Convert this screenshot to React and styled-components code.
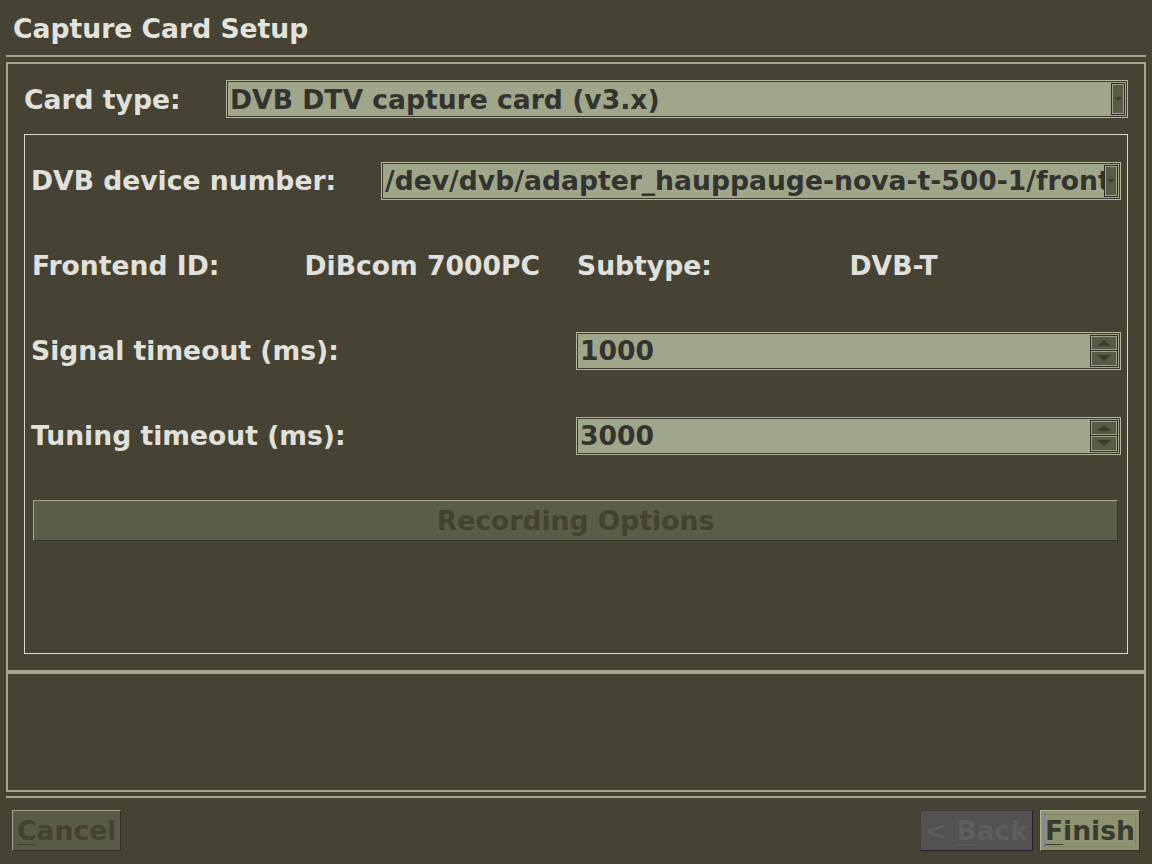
import styled, { createGlobalStyle } from "styled-components";

const GlobalStyle = createGlobalStyle`
    html, body {
        margin: 0;
        padding: 0;
        background: #474334;
    }
    body {
        font-family: "DejaVu Sans", "Liberation Sans", sans-serif;
        font-weight: bold;
        font-size: 26.6px;
    }
`

const Page = styled.div`
    width: 1152px;
    height: 864px;
    box-sizing: border-box;
    padding: 0 6px;
    display: flex;
    flex-direction: column;
    background: #474334;
    color: #e0e0dc;
    overflow: hidden;
`
const Title = styled.div`
    height: 55px;
    box-sizing: border-box;
    padding: 2px 0 0 7px;
    line-height: 53px;
    color: #e2e2de;
`
const Rule = styled.div`
    height: 2px;
    background: #a3a88c;
    margin-top: ${p => p.top || 0}px;
    margin-bottom: ${p => p.bottom || 0}px;
`
const Panel = styled.div`
    height: ${p => p.h}px;
    box-sizing: border-box;
    border: 2px solid #a3a88c;
    padding: ${p => p.pad || 0}px;
    display: flex;
    flex-direction: column;
`
const TopRow = styled.div`
    display: flex;
    align-items: center;
    height: 38px;
`
const Label = styled.div`
    width: ${p => p.w ? p.w + "px" : "auto"};
    flex-shrink: 0;
    white-space: nowrap;
    color: #e0e0dc;
`
const Field = styled.div`
    flex: 1;
    min-width: 0;
    height: 38px;
    box-sizing: border-box;
    border: 1px solid #b3b89c;
    box-shadow: inset 0 0 0 1px #3b3b2f;
    background: #9fa68a;
    display: flex;
    align-items: center;
    padding: 2px 2px 2px 3px;
    color: #333330;
    overflow: hidden;
`
const FieldText = styled.div`
    flex: 1;
    min-width: 0;
    white-space: nowrap;
    overflow: hidden;
`
const DropButton = styled.div`
    width: 14px;
    height: 100%;
    flex-shrink: 0;
    box-sizing: border-box;
    background: #585b46;
    border: 1px solid #2f2f27;
    box-shadow: inset 0 0 0 1px #9ea388;
    display: flex;
    align-items: center;
    justify-content: center;
    &::after {
        content: "";
        border-left: 4px solid transparent;
        border-right: 4px solid transparent;
        border-top: 4px solid #3f3d30;
    }
`
const SpinStack = styled.div`
    width: 28px;
    height: 100%;
    flex-shrink: 0;
    display: flex;
    flex-direction: column;
    gap: 1px;
    background: #2f2f27;
    border: 1px solid #2f2f27;
    box-sizing: border-box;
`
const SpinButton = styled.div`
    flex: 1;
    background: #585b46;
    box-shadow: inset 0 0 0 1px #9ea388;
    display: flex;
    align-items: center;
    justify-content: center;
    &::after {
        content: "";
        border-left: 7px solid transparent;
        border-right: 7px solid transparent;
        ${p => p.up ? "border-bottom: 6px solid #3f3d30;" : "border-top: 6px solid #3f3d30;"}
    }
`
const InnerBox = styled.div`
    flex: 1;
    margin-top: 16px;
    border: 1px solid #dcdcd0;
    padding: 3px 6px 0 6px;
    display: flex;
    flex-direction: column;
`
const Row = styled.div`
    height: 85px;
    display: flex;
    align-items: center;
`
const InfoGrid = styled.div`
    height: 85px;
    display: grid;
    grid-template-columns: repeat(4, 1fr);
    align-items: center;
`
const InfoCell = styled.div`
    padding-left: 1px;
    white-space: nowrap;
    color: #e0e0dc;
`
const Half = styled.div`
    width: 50%;
    display: flex;
    align-items: center;
`
const GroupButton = styled.div`
    width: 100%;
    height: 41px;
    box-sizing: border-box;
    background: #5a5d47;
    border: 1px solid #a3a88c;
    border-right-color: #34342a;
    border-bottom-color: #34342a;
    display: flex;
    align-items: center;
    justify-content: center;
    color: #43432f;
    margin: 0 3px 0 2px;
`
const ButtonBar = styled.div`
    display: flex;
    align-items: center;
    gap: 7px;
    margin-top: 12px;
    padding: 0 6px 0 6px;
`
const Spacer = styled.div`
    flex: 1;
`
const Button = styled.div`
    height: 41px;
    box-sizing: border-box;
    padding: 0 4px;
    display: flex;
    align-items: center;
    white-space: pre;
    background: ${p => p.bg};
    color: ${p => p.fg};
    border: 1px solid ${p => p.light};
    border-right-color: ${p => p.dark};
    border-bottom-color: ${p => p.dark};
    position: relative;
    u {
        text-decoration: underline;
        text-decoration-thickness: 1px;
        text-underline-offset: 4px;
    }
    ${p => p.focus && `
        &::before {
            content: "";
            position: absolute;
            inset: 3px;
            border: 1px dotted #7373a0;
        }
    `}
`

export default function App() {
    return (
        <>
            <GlobalStyle />
            <Page>
                <Title>Capture Card Setup</Title>
                <Rule bottom={5} />
                <Panel h={610} pad={16}>
                    <TopRow>
                        <Label w={202}>Card type:</Label>
                        <Field>
                            <FieldText>DVB DTV capture card (v3.x)</FieldText>
                            <DropButton />
                        </Field>
                    </TopRow>
                    <InnerBox>
                        <Row>
                            <Label w={350}>DVB device number:</Label>
                            <Field>
                                <FieldText>/dev/dvb/adapter_hauppauge-nova-t-500-1/frontend0</FieldText>
                                <DropButton />
                            </Field>
                        </Row>
                        <InfoGrid>
                            <InfoCell>Frontend ID:</InfoCell>
                            <InfoCell>DiBcom 7000PC</InfoCell>
                            <InfoCell>Subtype:</InfoCell>
                            <InfoCell>DVB-T</InfoCell>
                        </InfoGrid>
                        <Row>
                            <Half><Label>Signal timeout (ms):</Label></Half>
                            <Half>
                                <Field>
                                    <FieldText>1000</FieldText>
                                    <SpinStack>
                                        <SpinButton up />
                                        <SpinButton />
                                    </SpinStack>
                                </Field>
                            </Half>
                        </Row>
                        <Row>
                            <Half><Label>Tuning timeout (ms):</Label></Half>
                            <Half>
                                <Field>
                                    <FieldText>3000</FieldText>
                                    <SpinStack>
                                        <SpinButton up />
                                        <SpinButton />
                                    </SpinStack>
                                </Field>
                            </Half>
                        </Row>
                        <Row>
                            <GroupButton>Recording Options</GroupButton>
                        </Row>
                    </InnerBox>
                </Panel>
                <Panel h={120} />
                <Rule top={4} />
                <ButtonBar>
                    <Button bg="#585b46" fg="#45432f" light="#a3a88c" dark="#2f2f27"><span><u>C</u>ancel</span></Button>
                    <Spacer />
                    <Button bg="#525252" fg="#5e5e5c" light="#3e3e36" dark="#1f2030"><span>{"< "}<u>B</u>ack</span></Button>
                    <Button bg="#8d9371" fg="#3b3a2f" light="#b3b89c" dark="#2f2f27" focus><span><u>F</u>inish</span></Button>
                </ButtonBar>
            </Page>
        </>
    );
}
